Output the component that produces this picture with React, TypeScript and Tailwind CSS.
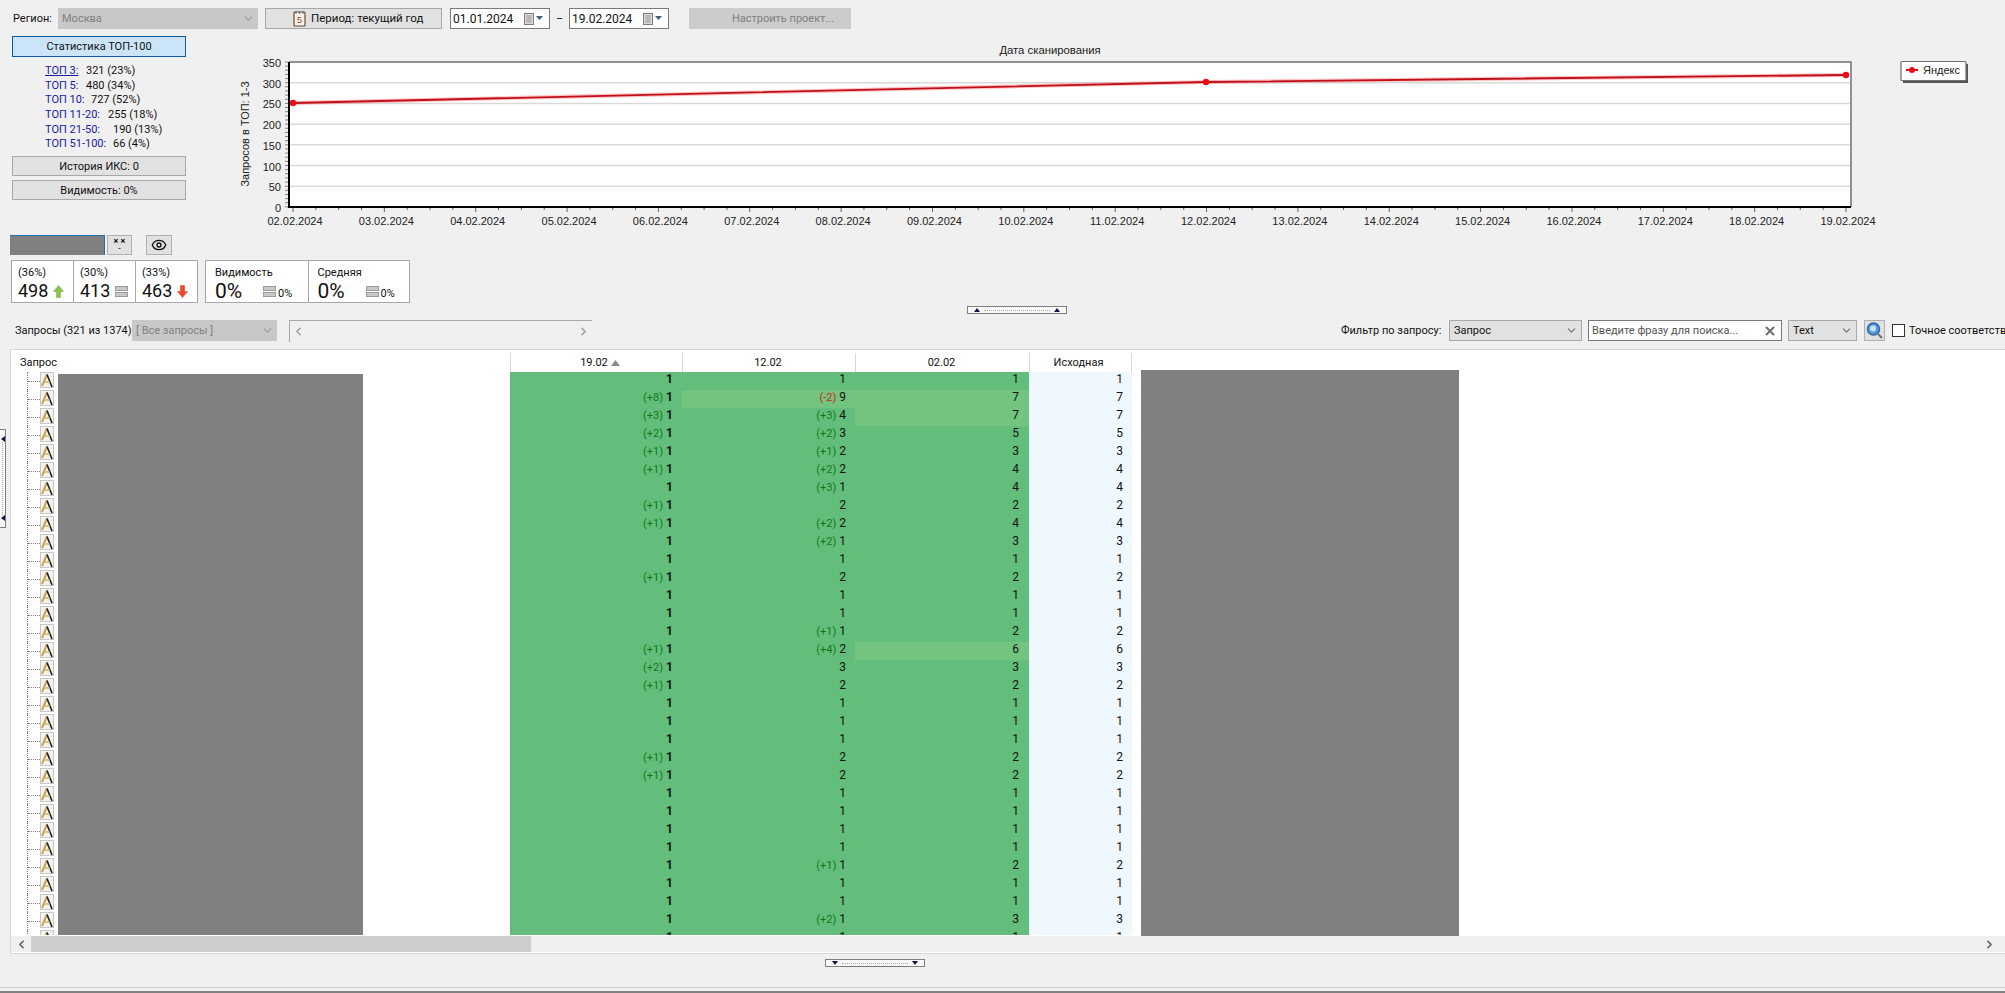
import { ChevronDown, ChevronLeft, ChevronRight, Eye, X } from "lucide-react";

const FONT = "font-['Roboto','Liberation_Sans',sans-serif]";

// delta, value pairs per row: [d1, d2, v2, v3, v4]
const rows: [string, string, number, number, number][] = [
    ["", "", 1, 1, 1],
    ["+8", "-2", 9, 7, 7],
    ["+3", "+3", 4, 7, 7],
    ["+2", "+2", 3, 5, 5],
    ["+1", "+1", 2, 3, 3],
    ["+1", "+2", 2, 4, 4],
    ["", "+3", 1, 4, 4],
    ["+1", "", 2, 2, 2],
    ["+1", "+2", 2, 4, 4],
    ["", "+2", 1, 3, 3],
    ["", "", 1, 1, 1],
    ["+1", "", 2, 2, 2],
    ["", "", 1, 1, 1],
    ["", "", 1, 1, 1],
    ["", "+1", 1, 2, 2],
    ["+1", "+4", 2, 6, 6],
    ["+2", "", 3, 3, 3],
    ["+1", "", 2, 2, 2],
    ["", "", 1, 1, 1],
    ["", "", 1, 1, 1],
    ["", "", 1, 1, 1],
    ["+1", "", 2, 2, 2],
    ["+1", "", 2, 2, 2],
    ["", "", 1, 1, 1],
    ["", "", 1, 1, 1],
    ["", "", 1, 1, 1],
    ["", "", 1, 1, 1],
    ["", "+1", 1, 2, 2],
    ["", "", 1, 1, 1],
    ["", "", 1, 1, 1],
    ["", "+2", 1, 3, 3],
    ["", "", 1, 1, 1],
];

const topStats = [
    { label: "ТОП 3:", value: "321 (23%)", w: "w-[41px]", link: true },
    { label: "ТОП 5:", value: "480 (34%)", w: "w-[41px]", link: false },
    { label: "ТОП 10:", value: "727 (52%)", w: "w-[46px]", link: false },
    { label: "ТОП 11-20:", value: "255 (18%)", w: "w-[63px]", link: false },
    { label: "ТОП 21-50:", value: "190 (13%)", w: "w-[68px]", link: false },
    { label: "ТОП 51-100:", value: "66 (4%)", w: "w-[68px]", link: false },
];

const dates = ["02", "03", "04", "05", "06", "07", "08", "09", "10", "11", "12", "13", "14", "15", "16", "17", "18", "19"];

function CalendarIcon() {
    return (
        <svg width="20" height="12" viewBox="0 0 20 12">
            <rect x="0.5" y="0.5" width="9" height="11" fill="#d8d8d8" stroke="#808080" />
            <path d="M2 3h6M2 5h6M2 7h6M2 9h6M4 2v8M6 2v8" stroke="#a0a0a0" strokeWidth="0.7" />
            <path d="M12 3h7l-3.5 4z" fill="#40607f" />
        </svg>
    );
}

function PeriodIcon() {
    return (
        <svg width="13" height="17" viewBox="0 0 13 17">
            <rect x="1" y="2" width="11" height="14" rx="1" fill="#f6f1ea" stroke="#6a4a3a" strokeWidth="1.2" />
            <path d="M3 1v3M6.500 1v3M10 1v3" stroke="#6a6a6a" />
            <text x="6.500" y="13" fontSize="9" textAnchor="middle" fill="#a0401a" fontFamily="Liberation Sans">5</text>
        </svg>
    );
}

function EqualIcon() {
    return (
        <svg width="13" height="11" viewBox="0 0 13 11" className="shrink-0">
            <rect x="0.500" y="0.500" width="12" height="4" fill="#c8c8c8" stroke="#9a9a9a" />
            <rect x="0.500" y="6.500" width="12" height="4" fill="#c8c8c8" stroke="#9a9a9a" />
        </svg>
    );
}

function ArrowIcon({ up }: { up: boolean }) {
    return (
        <svg width="11" height="13" viewBox="0 0 11 13" className="shrink-0">
            {up ? (
                <path d="M5.500 0.500 10.500 6.500H7.500V12.500H3.500V6.500H0.500z" fill="#8cc152" stroke="#6fa83a" strokeWidth="0.5" />
            ) : (
                <path d="M5.500 12.500 10.500 6.500H7.500V0.500H3.500V6.500H0.500z" fill="#f0492a" stroke="#d93a1f" strokeWidth="0.5" />
            )}
        </svg>
    );
}

function RowIcon() {
    return (
        <svg width="14" height="16" viewBox="0 0 14 16" className="-mt-[2px] shrink-0">
            <rect x="0.500" y="0.500" width="13" height="15" fill="#f2f2f2" stroke="#c8c8c8" />
            <path d="M7 2.500 2 14" stroke="#cda64a" strokeWidth="2" fill="none" />
            <path d="M7 2.500 12 15" stroke="#1c1c1c" strokeWidth="1.600" fill="none" />
            <path d="M4 10h6" stroke="#cda64a" strokeWidth="1.200" />
        </svg>
    );
}

function SearchIcon() {
    return (
        <svg width="17" height="19" viewBox="0 0 17 19">
            <circle cx="7.500" cy="8" r="6" fill="#5b9bd5" stroke="#2a6aa8" strokeWidth="1.500" />
            <circle cx="7" cy="7.500" r="3" fill="#c6e0f5" />
            <path d="M12 13l4 4" stroke="#707070" strokeWidth="2" />
        </svg>
    );
}

function Splitter({ down }: { down: boolean }) {
    const shape = down ? "M0 0h6l-3 4z" : "M0 4h6l-3-4z";
    return (
        <div className="flex h-[8px] w-[100px] items-center justify-between border border-[#808080] bg-[#f8f8f8] px-[6px]">
            <svg width="6" height="4"><path d={shape} fill="#10105a" /></svg>
            <div className="mx-[4px] flex-1 border-t border-dotted border-[#a8a8a8]" />
            <svg width="6" height="4"><path d={shape} fill="#10105a" /></svg>
        </div>
    );
}

function Chart() {
    const x0 = 293;
    const step = (1846 - 293) / 17;
    const yFor = (v: number) => 207 - (v / 350) * 145;
    return (
        <svg width="1815" height="199" viewBox="190 36 1815 199" className="block">
            <rect x="289" y="62" width="1562" height="145" fill="#fff" />
            {[300, 250, 200, 150, 100, 50].map((v) => (
                <line key={v} x1="290" x2="1850" y1={yFor(v)} y2={yFor(v)} stroke="#d9d9d9" strokeWidth="1.500" />
            ))}
            <path d="M289 62H1851V207" fill="none" stroke="#707070" strokeWidth="1.500" />
            <path d="M289 62V207H1851" fill="none" stroke="#000" strokeWidth="2" />
            {Array.from({ length: 36 }).map((_, i) => (
                <line key={i} x1="285" x2="288" y1={62 + i * 4.14} y2={62 + i * 4.14} stroke="#808080" strokeWidth="1" />
            ))}
            {[0, 50, 100, 150, 200, 250, 300, 350].map((v) => (
                <text key={v} x="281" y={yFor(v) + 5} textAnchor="end" fontSize="11" fontFamily="Liberation Sans" fill="#222">{v}</text>
            ))}
            <text transform="translate(249,134) rotate(-90)" textAnchor="middle" fontSize="11" fontFamily="Liberation Sans" fill="#222">Запросов в ТОП: 1-3</text>
            <text x="1050" y="54" textAnchor="middle" fontSize="11.300" fontFamily="Liberation Sans" fill="#222">Дата сканирования</text>
            {Array.from({ length: 69 }).map((_, i) => {
                const x = x0 + (i * step) / 4;
                return <line key={i} x1={x} x2={x} y1="208" y2={i % 4 === 0 ? 212 : 210} stroke="#606060" strokeWidth="1" />;
            })}
            {dates.map((d, i) => (
                <text key={d} x={x0 + i * step + 2} y="225" textAnchor="middle" fontSize="11" fontFamily="Liberation Sans" fill="#222">{d}.02.2024</text>
            ))}
            <polyline points="293,103 1206,82 1846,75" fill="none" stroke="#ff5050" strokeOpacity="0.35" strokeWidth="4" />
            <polyline points="293,103 1206,82 1846,75" fill="none" stroke="#c0101c" strokeWidth="1.800" />
            {[[293, 103], [1206, 82], [1846, 75]].map(([x, y]) => (
                <circle key={x} cx={x} cy={y} r="3.200" fill="#ee0a14" />
            ))}
            <rect x="1903" y="64" width="65" height="19" fill="#555" />
            <rect x="1901" y="61.500" width="65" height="19" rx="1" fill="#fff" stroke="#707070" strokeWidth="1.200" />
            <line x1="1906" x2="1918" y1="70" y2="70" stroke="#d0101a" strokeWidth="2" />
            <circle cx="1912" cy="70" r="3" fill="#ee0a14" />
            <text x="1923" y="74" fontSize="11" fontFamily="Liberation Sans" fill="#222">Яндекс</text>
        </svg>
    );
}

function DateBox({ value, className }: { value: string; className: string }) {
    return (
        <div className={`flex h-[21px] w-[100px] items-center justify-between border border-[#7a7a7a] bg-white pl-[2px] pr-[5px] text-[12px] ${className}`}>
            <span>{value}</span>
            <CalendarIcon />
        </div>
    );
}

function Cell({ delta, value, className }: { delta?: string; value: number; className: string }) {
    return (
        <div className={`flex h-[18px] items-center justify-end gap-[3px] pb-[4px] ${className}`}>
            {delta ? (
                <span className={`text-[11px] font-normal ${delta.startsWith("-") ? "text-[#c62a10]" : "text-[#0b7a18]"}`}>({delta})</span>
            ) : null}
            <span>{value}</span>
        </div>
    );
}

export default function App() {
    return (
        <div className={`relative h-[993px] w-[2005px] overflow-hidden bg-[#f0f0f0] text-[11px] leading-none text-[#111] ${FONT}`}>
            {/* toolbar */}
            <div className="flex items-center pl-[13px] pt-[8px]">
                <span className="w-[45px]">Регион:</span>
                <div className="flex h-[21px] w-[200px] items-center justify-between bg-[#c8c8c8] pl-[4px] pr-[3px] text-[#808080]">
                    <span>Москва</span>
                    <ChevronDown size={13} className="text-[#9a9a9a]" />
                </div>
                <div className="ml-[7px] flex h-[21px] w-[177px] items-center gap-[5px] border border-[#a8a8a8] bg-[#e1e1e1] pl-[27px] text-[11.500px]">
                    <PeriodIcon />
                    <span>Период: текущий год</span>
                </div>
                <DateBox value="01.01.2024" className="ml-[8px]" />
                <span className="w-[19px] text-center">–</span>
                <DateBox value="19.02.2024" className="" />
                <div className="ml-[20px] flex h-[21px] w-[162px] items-center justify-center bg-[#cccccc] pl-[26px] text-[#808080]">
                    Настроить проект...
                </div>
            </div>

            {/* stats and chart */}
            <div className="mt-[7px] flex h-[199px]">
                <div className="ml-[12px] w-[174px]">
                    <div className="flex h-[21px] items-center justify-center border border-[#0a5a9c] bg-[#cce4f7]">
                        Статистика ТОП-100
                    </div>
                    <div className="ml-[33px] mt-[6px]">
                        {topStats.map((s) => (
                            <div key={s.label} className="flex h-[14.700px] items-center">
                                <span className={`shrink-0 whitespace-nowrap text-[#1a1aa6] ${s.w} ${s.link ? "underline" : ""}`}>{s.label}</span>
                                <span className="whitespace-nowrap">{s.value}</span>
                            </div>
                        ))}
                    </div>
                    <div className="mt-[5px] flex h-[20px] items-center justify-center border border-[#a8a8a8] bg-[#e1e1e1]">История ИКС: 0</div>
                    <div className="mt-[4px] flex h-[20px] items-center justify-center border border-[#a8a8a8] bg-[#e1e1e1]">Видимость: 0%</div>
                </div>
                <div className="ml-[4px]">
                    <Chart />
                </div>
            </div>

            {/* account row */}
            <div className="flex h-[20px] pl-[10px]">
                <div className="h-full w-[95px] border-r border-t border-[#1a6fb0] bg-[#808080]" />
                <div className="ml-[2px] flex h-full w-[25px] flex-col items-center justify-center border border-[#b0b0b0] bg-[#e1e1e1] text-[9px] leading-[7px]">
                    <span className="font-bold">× ×</span>
                    <span>-</span>
                </div>
                <div className="ml-[14px] flex h-full w-[26px] items-center justify-center border border-[#b0b0b0] bg-[#e1e1e1]">
                    <Eye size={16} strokeWidth={2} />
                </div>
            </div>

            {/* counters */}
            <div className="mt-[5px] flex h-[43px] pl-[11px]">
                <div className="flex w-[187px] border border-[#a8a8a8] bg-white">
                    {[
                        { pct: "(36%)", n: "498", icon: <ArrowIcon up /> },
                        { pct: "(30%)", n: "413", icon: <EqualIcon /> },
                        { pct: "(33%)", n: "463", icon: <ArrowIcon up={false} /> },
                    ].map((c, i) => (
                        <div key={c.n} className={`flex-1 pl-[6px] pt-[6px] ${i > 0 ? "border-l border-[#a8a8a8]" : ""}`}>
                            <div>{c.pct}</div>
                            <div className="mt-[4px] flex items-center gap-[5px] text-[18px]">
                                {c.n}
                                {c.icon}
                            </div>
                        </div>
                    ))}
                </div>
                <div className="ml-[7px] flex w-[205px] border border-[#a8a8a8] bg-white">
                    {["Видимость", "Средняя"].map((t, i) => (
                        <div key={t} className={`w-[50%] pl-[9px] pt-[6px] ${i > 0 ? "border-l border-[#a8a8a8]" : ""}`}>
                            <div>{t}</div>
                            <div className="mt-[3px] flex items-center text-[21px]">
                                <span className="w-[48px]">0%</span>
                                <EqualIcon />
                                <span className="ml-[2px] mt-[3px] text-[11px]">0%</span>
                            </div>
                        </div>
                    ))}
                </div>
            </div>

            {/* splitter */}
            <div className="ml-[967px] mt-[3px]">
                <Splitter down={false} />
            </div>

            {/* filter row */}
            <div className="mt-[5px] flex h-[23px] items-center whitespace-nowrap pl-[15px]">
                <span className="w-[117px] shrink-0">Запросы (321 из 1374)</span>
                <div className="flex h-[21px] w-[145px] shrink-0 items-center justify-between bg-[#c8c8c8] pl-[4px] pr-[3px] text-[#808080]">
                    <span>[ Все запросы ]</span>
                    <ChevronDown size={13} className="text-[#9a9a9a]" />
                </div>
                <div className="ml-[12px] flex h-[22px] w-[303px] shrink-0 items-center justify-between border-l border-t border-[#a8a8a8] border-b-white border-r-white bg-[#f0f0f0] px-[2px] text-[#a0a0a0]">
                    <ChevronLeft size={13} strokeWidth={3} />
                    <ChevronRight size={13} strokeWidth={3} />
                </div>
                <span className="ml-[749px] w-[108px] shrink-0">Фильтр по запросу:</span>
                <div className="flex h-[21px] w-[133px] shrink-0 items-center justify-between border border-[#a8a8a8] bg-[#e1e1e1] pl-[4px] pr-[3px]">
                    <span>Запрос</span>
                    <ChevronDown size={13} className="text-[#707070]" />
                </div>
                <div className="ml-[6px] flex h-[21px] w-[194px] shrink-0 items-center justify-between border border-[#7a7a7a] bg-white pl-[3px] pr-[4px] text-[#555]">
                    <span>Введите фразу для поиска...</span>
                    <X size={14} strokeWidth={3.500} className="text-[#707070]" />
                </div>
                <div className="ml-[6px] flex h-[21px] w-[69px] shrink-0 items-center justify-between border border-[#a8a8a8] bg-[#e1e1e1] pl-[4px] pr-[3px]">
                    <span>Text</span>
                    <ChevronDown size={13} className="text-[#707070]" />
                </div>
                <div className="ml-[7px] flex h-[21px] w-[21px] shrink-0 items-center justify-center border border-[#b0b0b0] bg-[#e1e1e1]">
                    <SearchIcon />
                </div>
                <div className="ml-[7px] h-[13px] w-[13px] shrink-0 border border-[#333] bg-white" />
                <span className="ml-[4px] shrink-0">Точное соответствие</span>
            </div>

            {/* table */}
            <div className="relative ml-[10px] mt-[7px] h-[605px] border-b border-l border-t border-[#d8d8d8] bg-white">
                <div className="flex h-[22px] items-center">
                    <div className="mt-[2px] w-[499px] pl-[9px]">Запрос</div>
                    <div className="flex h-[19px] w-[172px] items-center justify-center gap-[3px] self-end border-l border-[#d8d8d8] pl-[7px]">
                        19.02
                        <svg width="9" height="6"><path d="M0 6h9L4.500 0z" fill="#8a8a8a" /></svg>
                    </div>
                    <div className="flex h-[19px] w-[173px] items-center justify-center self-end border-l border-[#d8d8d8] pr-[2px]">12.02</div>
                    <div className="flex h-[19px] w-[174px] items-center justify-center self-end border-l border-[#d8d8d8] pr-[2px]">02.02</div>
                    <div className="flex h-[19px] w-[103px] items-center justify-center self-end border-x border-[#d8d8d8] pr-[4px]">Исходная</div>
                </div>
                <div className="h-[563px] overflow-hidden text-[12px]">
                    {rows.map((r, i) => (
                        <div key={i} className="flex h-[18px]">
                            <div className="flex w-[499px] items-center pl-[16px]">
                                <div className="flex h-full w-[13px] items-center border-l border-dotted border-[#808080]">
                                    <div className="w-full border-t border-dotted border-[#808080]" />
                                </div>
                                <RowIcon />
                            </div>
                            <Cell delta={r[0]} value={1} className="w-[172px] bg-[#63be7b] pr-[9px] font-bold" />
                            <Cell delta={r[1]} value={r[2]} className={`w-[173px] pr-[9px] ${i === 1 ? "bg-[#72c47f]" : "bg-[#63be7b]"}`} />
                            <Cell value={r[3]} className={`w-[174px] pr-[10px] ${i === 1 || i === 2 || i === 15 ? "bg-[#72c47f]" : "bg-[#63be7b]"}`} />
                            <Cell value={r[4]} className="w-[103px] bg-[#f0f8ff] pr-[9px]" />
                        </div>
                    ))}
                </div>
                {/* hidden names */}
                <div className="absolute left-[47px] top-[24px] h-[561px] w-[305px] bg-[#808080]" />
                <div className="absolute left-[1130px] top-[20px] h-[566px] w-[318px] bg-[#808080]" />
                <div className="mt-px flex h-[16px] items-center bg-[#f0f0f0] pr-[9px]">
                    <div className="flex w-[20px] justify-center text-[#606060]">
                        <ChevronLeft size={13} strokeWidth={3} />
                    </div>
                    <div className="h-full w-[500px] bg-[#cdcdcd]" />
                    <div className="flex flex-1 justify-end text-[#606060]">
                        <ChevronRight size={13} strokeWidth={3} />
                    </div>
                </div>
            </div>

            {/* bottom splitter */}
            <div className="ml-[825px] mt-[5px]">
                <Splitter down />
            </div>
            <div className="mt-[20px] h-[4px] border-t border-[#d0d0d0]" />
            <div className="h-[2px] bg-[#808080]" />

            {/* left splitter */}
            <div className="absolute left-0 top-[429px] flex h-[99px] w-[6px] flex-col items-center justify-between border-y border-r border-[#808080] bg-[#f8f8f8] py-[6px]">
                <svg width="4" height="6"><path d="M4 0v6L0 3z" fill="#10105a" /></svg>
                <div className="flex-1 border-l border-dotted border-[#a8a8a8]" />
                <svg width="4" height="6"><path d="M4 0v6L0 3z" fill="#10105a" /></svg>
            </div>
        </div>
    );
}
